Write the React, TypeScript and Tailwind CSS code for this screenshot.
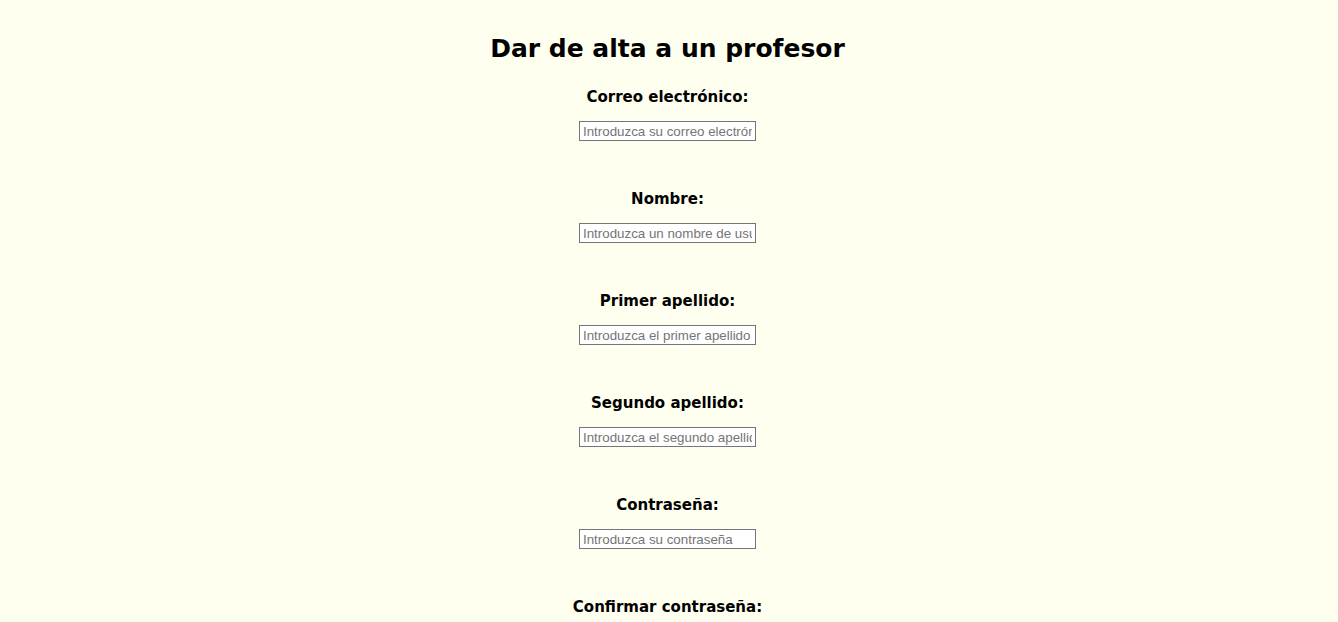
const fields = [
  { id: "email", label: "Correo electrónico:", type: "email", placeholder: "Introduzca su correo electrónico" },
  { id: "nombre", label: "Nombre:", type: "text", placeholder: "Introduzca un nombre de usuario" },
  { id: "apellido1", label: "Primer apellido:", type: "text", placeholder: "Introduzca el primer apellido" },
  { id: "apellido2", label: "Segundo apellido:", type: "text", placeholder: "Introduzca el segundo apellido" },
  { id: "password", label: "Contraseña:", type: "password", placeholder: "Introduzca su contraseña" },
  { id: "password2", label: "Confirmar contraseña:", type: "password", placeholder: "Confirme su contraseña" },
];

export default function App() {
  return (
    <div className="min-h-screen bg-[#fffff0] flex flex-col items-center pt-[34px] pr-[3px] pb-10">
      <h1 className="text-[25px] leading-[30px] font-bold text-black font-['DejaVu_Sans',sans-serif]">
        Dar de alta a un profesor
      </h1>

      <form className="flex flex-col items-center mt-[24px]">
        {fields.map((f) => (
          <div key={f.id} className="flex flex-col items-center mb-[49px]">
            <label
              htmlFor={f.id}
              className="text-[15px] leading-[18px] font-bold text-black font-['DejaVu_Sans',sans-serif]"
            >
              {f.label}
            </label>
            <input
              id={f.id}
              type={f.type}
              placeholder={f.placeholder}
              className="mt-[15px] w-[177px] h-[20px] px-[3px] border border-[#767676] bg-white text-[13.33px] font-['Liberation_Sans',Arial,sans-serif] placeholder:text-[#757575] outline-none"
            />
          </div>
        ))}
      </form>
    </div>
  );
}
